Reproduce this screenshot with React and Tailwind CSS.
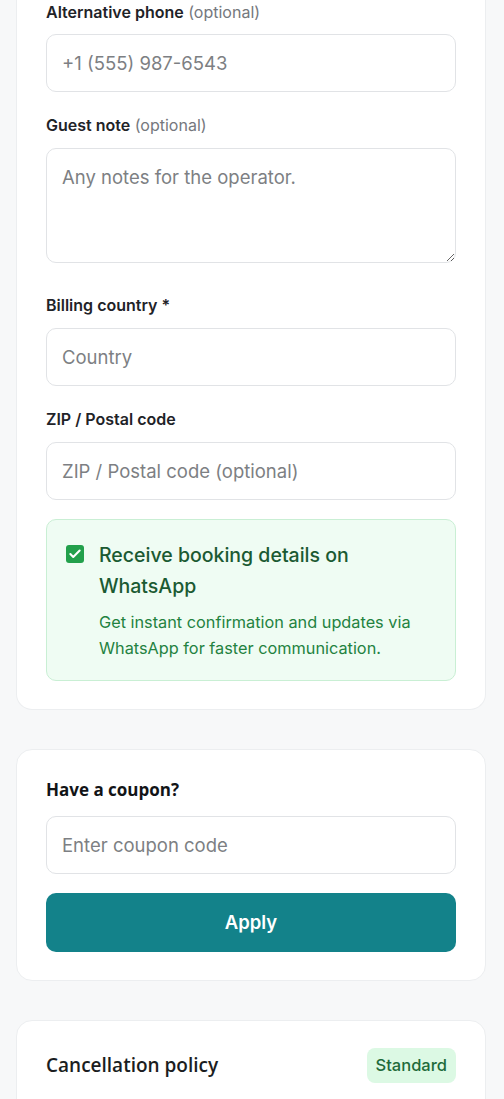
import { Check } from 'lucide-react';

const inputCls =
  'block w-full h-[58px] rounded-[10px] border border-[#e1e3e6] bg-white px-[15px] text-[18.5px] text-gray-800 placeholder:text-[#7d7f83] outline-none';

function Label({ children, hint }) {
  return (
    <p className="text-[16px] leading-[22px] font-semibold text-[#1f2328]">
      {children}
      {hint && <span className="font-normal text-[#75787d]"> {hint}</span>}
    </p>
  );
}

export default function App() {
  return (
    <div className="min-h-screen bg-[#f7f8f9] pl-4 pr-[18px] pb-10 font-['Inter',sans-serif]">
      {/* Guest details card (top scrolled off) */}
      <section className="rounded-b-2xl border border-t-0 border-[#eceef0] bg-white px-[29px] pt-px pb-[28px]">
        <Label hint="(optional)">Alternative phone</Label>
        <input className={`${inputCls} mt-[11px]`} placeholder="+1 (555) 987-6543" />

        <div className="mt-[22px]">
          <Label hint="(optional)">Guest note</Label>
          <textarea
            className="mt-[12px] block h-[115px] w-full resize-y rounded-[10px] border border-[#e1e3e6] bg-white px-[15px] pt-[16px] text-[18.5px] leading-6 text-gray-800 placeholder:text-[#7d7f83] outline-none"
            placeholder="Any notes for the operator."
          />
        </div>

        <div className="mt-[31px]">
          <Label>Billing country *</Label>
          <input className={`${inputCls} mt-[12px]`} placeholder="Country" />
        </div>

        <div className="mt-[22px]">
          <Label>ZIP / Postal code</Label>
          <input className={`${inputCls} mt-[12px]`} placeholder="ZIP / Postal code (optional)" />
        </div>

        <div className="mt-[19px] flex gap-[15px] rounded-[10px] border border-[#c9efd4] bg-[#effcf3] px-[19px] pt-[20px] pb-[19px]">
          <span className="mt-[5px] flex h-[18px] w-[18px] shrink-0 items-center justify-center rounded-[3px] bg-[#22a04b]">
            <Check className="h-[14px] w-[14px] text-white" strokeWidth={3.5} />
          </span>
          <div className="pr-2">
            <p className="text-[19.5px] leading-[31px] font-medium text-[#1b5a32]">
              Receive booking details on WhatsApp
            </p>
            <p className="mt-[7px] text-[16.3px] leading-[26px] text-[#23823f]">
              Get instant confirmation and updates via WhatsApp for faster communication.
            </p>
          </div>
        </div>
      </section>

      {/* Coupon card */}
      <section className="mt-[39px] rounded-2xl border border-[#eceef0] bg-white px-[29px] pt-[28px] pb-[28px]">
        <p className="font-['Open_Sans',sans-serif] text-[17px] leading-[24px] font-bold text-[#121417]">
          Have a coupon?
        </p>
        <input className={`${inputCls} mt-[14px]`} placeholder="Enter coupon code" />
        <button className="mt-[19px] h-[59px] w-full rounded-[10px] bg-[#13828a] text-[18.5px] font-semibold text-white">
          Apply
        </button>
      </section>

      {/* Cancellation card */}
      <section className="mt-[39px] rounded-2xl border border-[#eceef0] bg-white px-[29px] pt-[27px] pb-[28px]">
        <div className="flex items-center justify-between">
          <p className="font-['Open_Sans',sans-serif] text-[19px] font-semibold text-[#1b1d21]">
            Cancellation policy
          </p>
          <span className="flex h-[35px] items-center rounded-lg bg-[#dcf9e4] px-[9px] text-[16.5px] font-medium text-[#1f6b3a]">
            Standard
          </span>
        </div>
        <div className="h-24" />
      </section>
    </div>
  );
}
